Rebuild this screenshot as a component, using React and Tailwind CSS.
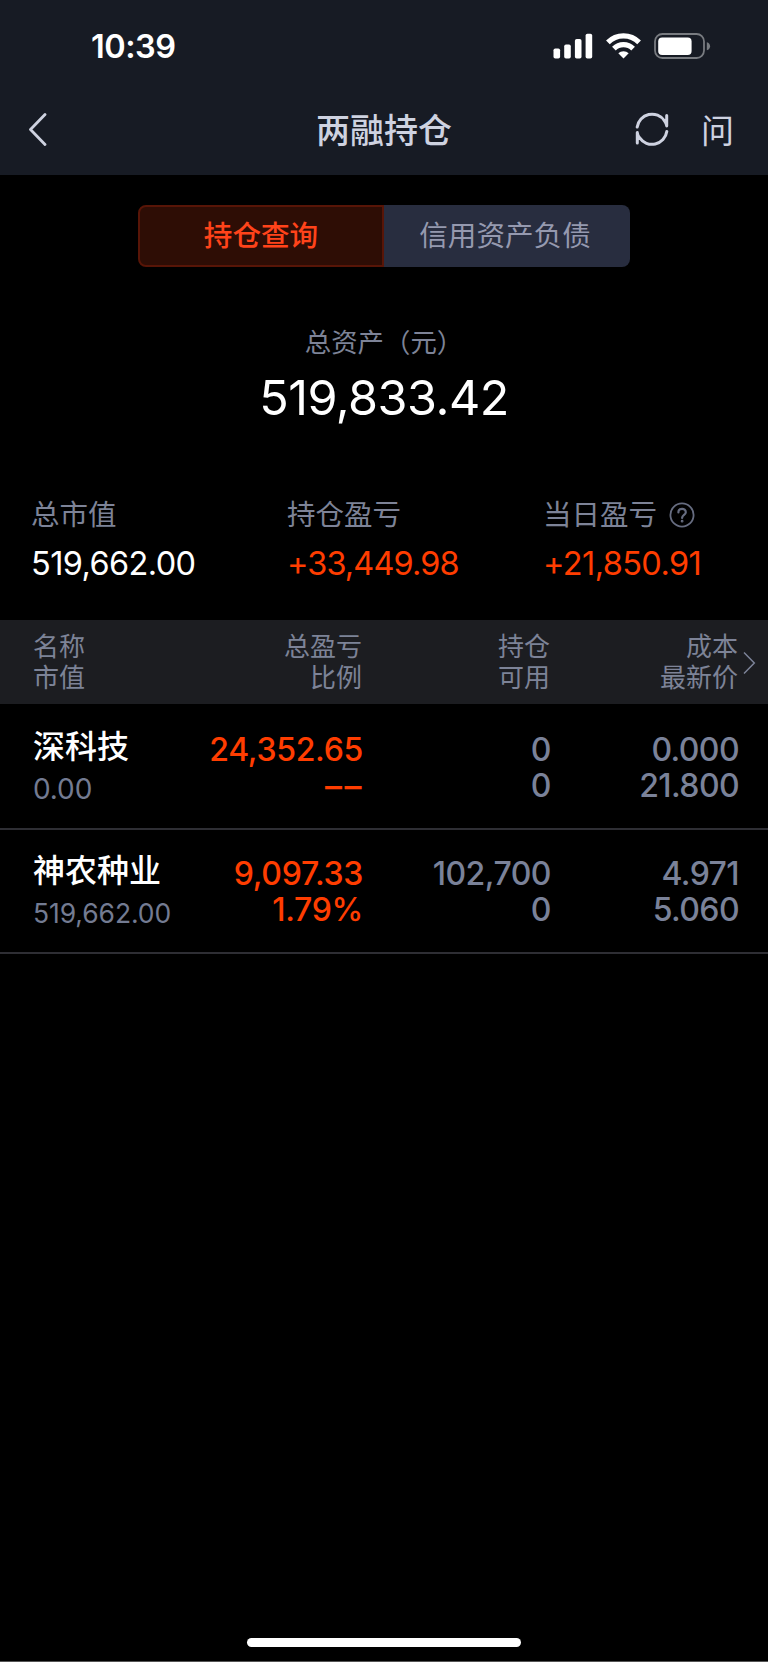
import React from 'react';

const stats = [
  { label: '总市值', value: '519,662.00', color: 'text-white', spacing: 'tracking-[-0.6px]' },
  { label: '持仓盈亏', value: '+33,449.98', color: 'text-[#ff3d00]', spacing: 'tracking-[-0.9px]' },
  { label: '当日盈亏', value: '+21,850.91', color: 'text-[#ff3d00]', spacing: 'tracking-[-0.6px]', help: true },
];

const columns = [
  ['总盈亏', '比例'],
  ['持仓', '可用'],
  ['成本', '最新价'],
];

const holdings = [
  {
    name: '深科技',
    marketValue: '0.00',
    valueSize: 'text-[28px]',
    profit: '24,352.65',
    ratio: <span className="-mr-px text-[34px] tracking-[2.5px]">––</span>,
    held: '0',
    available: '0',
    cost: '0.000',
    price: '21.800',
  },
  {
    name: '神农种业',
    marketValue: '519,662.00',
    valueSize: 'text-[26.5px]',
    profit: '9,097.33',
    ratio: '1.79%',
    held: '102,700',
    available: '0',
    cost: '4.971',
    price: '5.060',
  },
];

const StatusBar = () => (
  <div className="flex h-[92px] items-center justify-between pl-[91px] pr-[57px]">
    <span className="pt-0.5 font-[Inter,sans-serif] text-[32.5px] font-semibold leading-none tracking-[-0.5px] text-white">
      10:39
    </span>
    <div className="flex items-center">
      <svg className="mr-[13px]" width="40" height="26" viewBox="0 0 40 26" fill="#fff">
        <rect x="0.5" y="15.5" width="6.6" height="10" rx="1.8" />
        <rect x="11.2" y="11.5" width="6.6" height="14" rx="1.8" />
        <rect x="21.9" y="6" width="6.6" height="19.5" rx="1.8" />
        <rect x="32.6" y="0.8" width="6.6" height="24.7" rx="1.8" />
      </svg>
      <svg className="mr-[13px]" width="35" height="26" viewBox="0 0 35 26" fill="none" stroke="#fff">
        <path d="M1.9 9.4a22 22 0 0 1 31.2 0" strokeWidth="5.2" />
        <path d="M7.9 15.6a13.6 13.6 0 0 1 19.2 0" strokeWidth="5.2" />
        <path d="M12.3 20.3a7.4 7.4 0 0 1 10.4 0L17.5 25.4z" fill="#fff" stroke="none" />
      </svg>
      <svg width="57" height="26" viewBox="0 0 57 26">
        <rect x="1" y="1" width="49" height="24" rx="7.5" fill="none" stroke="#787b80" strokeWidth="1.8" />
        <rect x="4.2" y="4.4" width="33.4" height="17.6" rx="4" fill="#fff" />
        <path d="M52.8 9.2c4.4 1 4.4 7 0 8z" fill="#787b80" />
      </svg>
    </div>
  </div>
);

const NavBar = () => (
  <div className="flex h-[74px] items-center pl-7 pr-[34px] text-[#ced2e0]">
    <svg width="20" height="34" viewBox="0 0 20 34" fill="none" stroke="currentColor" strokeWidth="2.8" strokeLinecap="round" strokeLinejoin="round">
      <path d="M17 2.5L2.5 17.5L17 32.5" />
    </svg>
    <h1 className="flex-1 pl-[85px] text-center text-[34px] font-medium leading-none">两融持仓</h1>
    <svg width="34" height="34" viewBox="0 0 34 34" fill="none" stroke="currentColor" strokeWidth="3" strokeLinecap="round" strokeLinejoin="round">
      <path d="M2.2 15A15 15 0 0 1 29.5 8.8Q31.5 11.5 31.7 14V3.5" />
      <path d="M31.8 19.5A15 15 0 0 1 4.5 25.7Q2.5 23 2.3 20.5V31" />
    </svg>
    <span className="ml-8 text-[33px] leading-none">问</span>
  </div>
);

const Tabs = () => (
  <div className="mx-auto mt-[30px] flex h-[62px] w-[492px] text-[28.6px] leading-[56px]">
    <button className="w-[246px] rounded-l-lg border-2 border-[#581507] bg-[#2e0d05] pb-1.5 font-medium leading-[54px] text-[#ff431a]">
      持仓查询
    </button>
    <button className="w-[246px] rounded-r-lg bg-[#282d3f] pb-1 pr-1 text-[#9599af]">
      信用资产负债
    </button>
  </div>
);

const Summary = () => (
  <section>
    <div className="mt-[54px] text-center">
      <div className="text-[26.4px] leading-10 text-[#7d8397]">总资产（元）</div>
      <div className="mt-2 font-[Inter,sans-serif] text-[48.5px] leading-[58px] tracking-[-0.5px] text-white">519,833.42</div>
    </div>
    <div className="mt-[66px] grid h-[127px] grid-cols-[256px_256px_1fr] pl-[31px]">
      {stats.map((item) => (
        <div key={item.label}>
          <div className="flex items-center text-[28.5px] leading-10 text-[#7d8397]">
            {item.label}
            {item.help && (
              <svg className="ml-3 mt-1" width="26" height="26" viewBox="0 0 26 26" fill="none" stroke="#666c80" strokeWidth="1.8" strokeLinecap="round">
                <circle cx="13" cy="13" r="11.6" />
                <path d="M9.4 10.4c0-4.7 7.4-4.6 7.4-.2 0 2.8-3.7 2.8-3.7 5.8" strokeWidth="2.2" />
                <circle cx="13.1" cy="19.2" r="0.6" strokeWidth="1.6" />
              </svg>
            )}
          </div>
          <div className={`mt-[11px] font-[Inter,sans-serif] text-[32.5px] leading-10 ${item.spacing} ${item.color}`}>
            {item.value}
          </div>
        </div>
      ))}
    </div>
  </section>
);

const TableHeader = () => (
  <div className="flex h-[84px] bg-[#1c1d21] pl-[33px] pt-[10px] text-[26px] leading-[30.5px] text-[#7d8397]">
    <div className="w-[150px]">
      <div>名称</div>
      <div>市值</div>
    </div>
    {columns.map(([top, bottom], i) => (
      <div key={top} className={i === 0 ? 'w-[179px] text-right' : 'w-[188px] text-right'}>
        <div>{top}</div>
        <div>{bottom}</div>
      </div>
    ))}
    <svg className="ml-1 mt-[20px]" width="14" height="26" viewBox="0 0 14 26" fill="none" stroke="#7c8398" strokeWidth="1.5">
      <path d="M2 2.5L12.3 13L2 23.5" />
    </svg>
  </div>
);

const NumberCell = ({ top, bottom, className }) => (
  <div className={`pt-[27px] text-right font-[Inter,sans-serif] text-[32px] font-medium leading-9 ${className}`}>
    <div>{top}</div>
    <div className="h-9">{bottom}</div>
  </div>
);

const HoldingRow = ({ item }) => (
  <div className="-mb-px flex h-[125px] border-b-2 border-[#2e2e34] pl-[33px]">
    <div className="w-[150px] whitespace-nowrap">
      <div className="pt-[19px] text-[32px] font-medium leading-10 text-white">{item.name}</div>
      <div className={`mt-[5px] font-[Inter,sans-serif] leading-10 tracking-[-0.1px] text-[#737b92] ${item.valueSize}`}>
        {item.marketValue}
      </div>
    </div>
    <NumberCell top={item.profit} bottom={item.ratio} className="w-[180px] tracking-[-0.3px] text-[#ff3d00]" />
    <NumberCell top={item.held} bottom={item.available} className="w-[188px] tracking-[-0.5px] text-[#7a8299]" />
    <NumberCell top={item.cost} bottom={item.price} className="w-[188px] tracking-[-0.6px] text-[#7a8299]" />
  </div>
);

const App = () => {
  return (
    <div className="flex h-[1662px] w-[768px] flex-col border-b border-[#555] bg-black font-['Noto_Sans_CJK_SC',sans-serif]">
      <header className="h-[175px] bg-[#171b24]">
        <StatusBar />
        <NavBar />
      </header>
      <Tabs />
      <Summary />
      <TableHeader />
      <div className="pt-px">
        {holdings.map((item) => (
          <HoldingRow key={item.name} item={item} />
        ))}
      </div>
      <div className="mx-auto mb-[14px] mt-auto h-[9px] w-[274px] rounded-full bg-white"></div>
    </div>
  );
};

export default App;
